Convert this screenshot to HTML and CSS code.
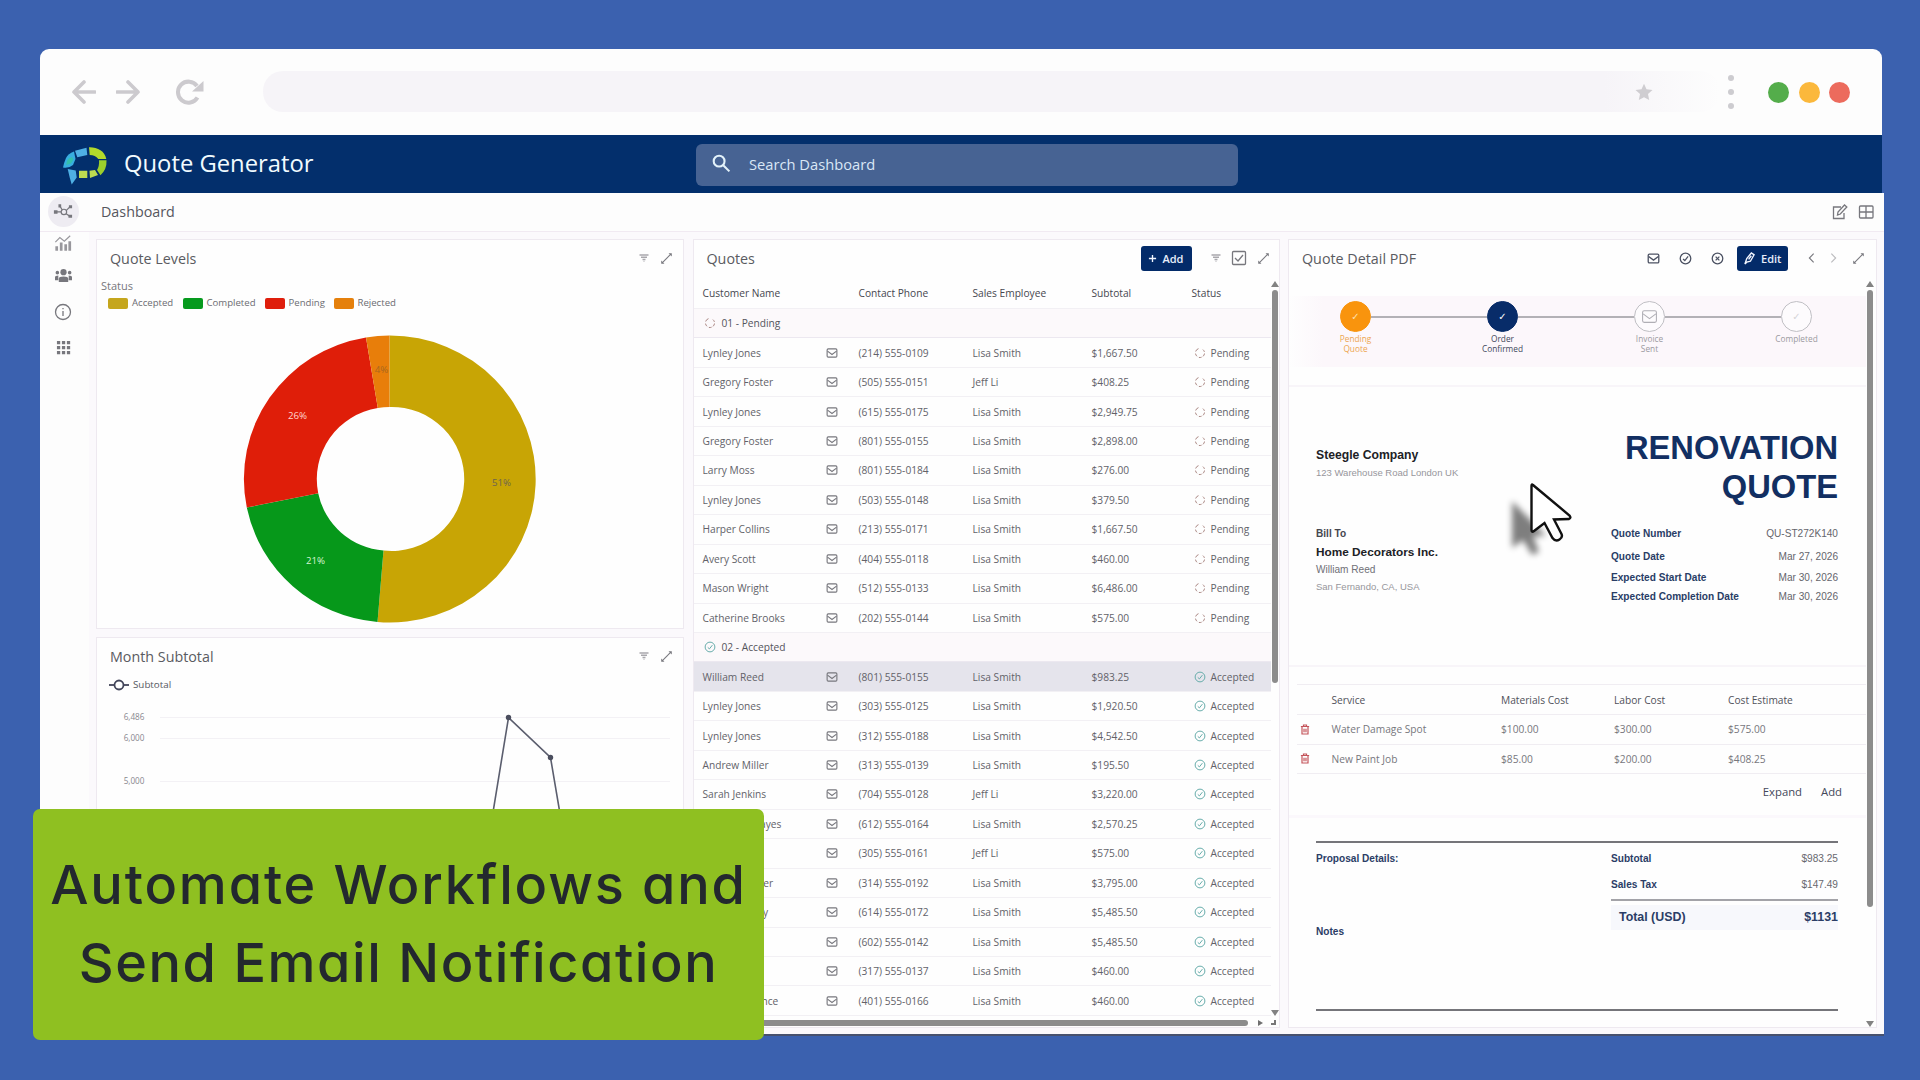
FILE: index.html
```html
<!DOCTYPE html>
<html lang="en">
<head>
    <meta charset="UTF-8">
    <meta name="viewport" content="width=device-width, initial-scale=1.0">
    <title>Quote Generator</title>
    <link rel="stylesheet" href="styles.css">
</head>
<body>
    <!-- icons -->
    <svg class="defs" width="0" height="0">
        <symbol id="i-mail" viewBox="0 0 16 16"><rect x="1.5" y="2.5" width="13" height="11" rx="1.5"/><path d="M2 5.5l6 4.5 6-4.5"/></symbol>
        <symbol id="i-check" viewBox="0 0 16 16"><circle cx="8" cy="8" r="6.5"/><path d="M5 8.5l2.2 2 4-5"/></symbol>
        <symbol id="i-cross" viewBox="0 0 16 16"><circle cx="8" cy="8" r="6.5"/><path d="M5.7 5.7l4.6 4.6M10.3 5.7l-4.6 4.6"/></symbol>
        <symbol id="i-pending" viewBox="0 0 16 16"><path d="M6 2.2A6 6 0 0 0 2.2 6M2 8.8a6 6 0 0 0 2 3.6M6.5 13.9a6 6 0 0 0 3.6-.3M12 12.5a6 6 0 0 0 2-3.8M13.9 6.5a6 6 0 0 0-2-3"/></symbol>
        <symbol id="i-expand" viewBox="0 0 16 16"><path d="M3 13L13 3"/><path class="solid" d="M10.500 1.500H14.500v4zM1.500 10.500V14.500h4z"/></symbol>
        <symbol id="i-filter" viewBox="0 0 16 16"><path d="M2 4h12M4 7h8M6 10h4M7.500 12.500h1"/></symbol>
        <symbol id="i-trash" viewBox="0 0 16 16"><path d="M2.500 4h11M6 3.500V2h4v1.500M4 4.500V14h8V4.500M6.700 7v4.500M9.300 7v4.500"/></symbol>
    </svg>

    <div class="window">
        <div class="chrome">
            <svg class="nav-arrow" viewBox="0 0 24 24"><path d="M23 12H2M12 2L2 12l10 10"/></svg>
            <svg class="nav-arrow forward" viewBox="0 0 24 24"><path d="M1 12h21M12 2l10 10-10 10"/></svg>
            <svg class="reload" viewBox="0 0 30 26"><path d="M22.500 18.500A10.500 10.500 0 1 1 22 7"/><path class="solid" d="M28.500 2v10.500H17z"/></svg>
            <div class="address">
                <svg class="star" viewBox="0 0 18 18"><path d="M9 .8l2.500 5.500 6 .7-4.500 4.100 1.200 6L9 14.200l-5.200 2.900 1.200-6L.5 7l6-.7z"/></svg>
            </div>
            <div class="dots"><i></i><i></i><i></i></div>
            <div class="lights"><i class="green"></i><i class="yellow"></i><i class="red"></i></div>
        </div>

        <header class="topbar">
            <svg class="logo" viewBox="0 0 44 39">
                <path fill="#38aee0" d="M11 5.500Q5 7.500 3 12T0 21.500q6 1 10-2.500l2.500-6z"/>
                <path fill="#35c0ad" d="M9 11q-4 1-5 4l-1 4 5-1.500 2.500-4z"/>
                <path fill="#4fb0e4" d="M12 4.700l11.500-3 .8 7.300-10 2.300zM4.700 23l8 1.500 1 7-5 7-2-7z"/>
                <path fill="#b3da2b" d="M26 1.300C34 1 42 5 43.300 13h-8q-3-4-8.600-4z"/>
                <path fill="#9ccf2c" d="M36 14.300h7.500q.5 9-6 15L34 24q2.500-4 2-9.700z"/>
                <path fill="#bddc50" d="M16 24.700h8.300V32H16zM26.500 24.700l5.500-.7 3 5-8 3z"/>
            </svg>
            <h1>Quote Generator</h1>
            <div class="search">
                <svg viewBox="0 0 20 20"><circle cx="7.500" cy="7.500" r="5.700"/><path d="M11.800 11.800l6.500 6.500"/></svg>
                <span>Search Dashboard</span>
            </div>
        </header>

        <div class="app">
            <div class="subbar">
                <span>Dashboard</span>
                <svg class="icon tool" viewBox="0 0 16 16"><path d="M9 3H1.500v11.500H12V9M5.500 11l.5-3 6.500-7 2.300 2L8.300 10z"/></svg>
                <svg class="icon tool" viewBox="0 0 16 16"><rect x="1.500" y="2" width="13.500" height="12" rx="1"/><path d="M8 2v12M1.500 8H15"/></svg>
            </div>
            <nav class="sidebar">
                <span class="current"><svg class="icon" viewBox="0 0 22 18"><circle cx="12" cy="9.500" r="3"/><path d="M9 9.500H3M10 7L7.500 3M14.500 8l4-4M14.500 11.500l3.500 2.500"/><path class="solid" d="M1 7.500h4v4H1zM6 1h3v3.500H6zM17.500 2h3.500v3.500h-3.500zM17 12.500h4V16h-4z"/></svg></span>
                <svg class="icon chart" viewBox="0 0 20 20"><path d="M1.500 9l5-5 5 4 6.500-6"/><path class="bars" d="M3 18.500v-5M8 18.500v-9M13 18.500v-7M17.500 18.500V8"/></svg>
                <svg class="icon people" viewBox="0 0 20 18"><g class="solid"><circle cx="10" cy="5.500" r="3.300"/><circle cx="3.500" cy="6" r="1.900"/><circle cx="16.500" cy="6" r="1.900"/><path d="M5 16v-3.500Q5 10 10 10t5 2.500V16zM1 14v-3q0-2 3.500-2v5zM19 14v-3q0-2-3.500-2v5z"/></g></svg>
                <svg class="icon info" viewBox="0 0 18 18"><circle cx="9" cy="9" r="7.500"/><path d="M9 8v5M9 5v1.300"/></svg>
                <svg class="icon apps" viewBox="0 0 16 16"><path class="solid" d="M1 1h3.500v3.500H1zM6.300 1h3.500v3.500H6.300zM11.600 1h3.500v3.500h-3.500zM1 6.300h3.500v3.500H1zM6.300 6.300h3.500v3.500H6.300zM11.600 6.300h3.500v3.500h-3.500zM1 11.600h3.500v3.500H1zM6.300 11.600h3.500v3.500H6.300zM11.600 11.600h3.500v3.500h-3.500z"/></svg>
            </nav>

            <main>
                <div class="column">
                    <section class="panel">
                        <div class="panel-head"><h2>Quote Levels</h2>
                            <svg class="icon filter"><use href="#i-filter"/></svg>
                            <svg class="icon expand"><use href="#i-expand"/></svg>
                        </div>
                        <div class="status-label">Status</div>
                        <div class="legend">
                            <span><i class="accepted"></i>Accepted</span>
                            <span><i class="completed"></i>Completed</span>
                            <span><i class="pending"></i>Pending</span>
                            <span><i class="rejected"></i>Rejected</span>
                        </div>
                        <svg class="donut" viewBox="-292.500 -165 586 313">
                            <path fill="#c8a505" d="M0-143.500A146 143.500 0 1 1-12 143L-6 71.500A72.500 72 0 1 0 0-72z"/>
                            <path fill="#06981a" d="M-12 143A146 143.500 0 0 1-142.700 28.500L-71.300 14.200A72.500 72 0 0 0-6 71.500z"/>
                            <path fill="#df1e09" d="M-142.700 28.500A146 143.500 0 0 1-23.500-141.600L-11.700-71A72.500 72 0 0 0-71.300 14.200z"/>
                            <path fill="#e87e0a" d="M-23.500-141.600A146 143.500 0 0 1 0-143.500V-72A72.500 72 0 0 0-11.700-71z"/>
                            <text x="112" y="7" fill="#6d6350">51%</text>
                            <text x="-74" y="85" fill="#d5f5d2">21%</text>
                            <text x="-92" y="-60" fill="#ffd9cf">26%</text>
                            <text x="-8" y="-106" fill="#a8681f">4%</text>
                        </svg>
                    </section>
                    <section class="panel">
                        <div class="panel-head"><h2>Month Subtotal</h2>
                            <svg class="icon filter"><use href="#i-filter"/></svg>
                            <svg class="icon expand"><use href="#i-expand"/></svg>
                        </div>
                        <div class="series">
                            <svg viewBox="0 0 20 12"><path d="M0 6h20"/><circle cx="10" cy="6" r="4.500"/></svg>Subtotal
                        </div>
                        <svg class="line-chart" viewBox="97 696 586 330">
                            <path class="grid" d="M160 718.500h510M160 739.500h510M160 782.500h510M160 825.500h510"/>
                            <text x="144.500" y="721">6,486</text>
                            <text x="144.500" y="742">6,000</text>
                            <text x="144.500" y="784.500">5,000</text>
                            <path class="line" d="M487 850L508.500 718.500 550.500 758.500 566 850"/>
                            <circle cx="508.500" cy="718.500" r="2.700"/>
                            <circle cx="550.500" cy="758.500" r="2.700"/>
                        </svg>
                    </section>
                </div>

                <section class="panel quotes">
                    <div class="panel-head"><h2>Quotes</h2>
                        <button class="add"><svg viewBox="0 0 10 10"><path d="M5 1v8M1 5h8"/></svg>Add</button>
                        <svg class="icon filter"><use href="#i-filter"/></svg>
                        <svg class="icon select" viewBox="0 0 16 16"><rect x="1.500" y="1.500" width="13" height="13" rx="1"/><path d="M4 8l3 3 5-6"/></svg>
                        <svg class="icon expand"><use href="#i-expand"/></svg>
                    </div>
                    <div class="scroll-area">
                        <div class="table" id="quotes"></div>
                        <div class="vscroll"><b class="up"></b><i></i><b class="down"></b></div>
                    </div>
                    <div class="hscroll"><i></i><b></b><em></em></div>
                </section>

                <section class="panel detail">
                    <div class="panel-head"><h2>Quote Detail PDF</h2>
                        <svg class="icon act"><use href="#i-mail"/></svg>
                        <svg class="icon act"><use href="#i-check"/></svg>
                        <svg class="icon act"><use href="#i-cross"/></svg>
                        <button class="edit"><svg viewBox="0 0 12 14"><path d="M1 13l2-6 5-6 3 2-4 7-4 1zM5 8l3-4"/></svg>Edit</button>
                        <svg class="icon chev" viewBox="0 0 8 14"><path d="M6.500 2l-5 5 5 5"/></svg>
                        <svg class="icon chev off" viewBox="0 0 8 14"><path d="M1.500 2l5 5-5 5"/></svg>
                        <svg class="icon expand"><use href="#i-expand"/></svg>
                    </div>
                    <div class="scroll-area">
                        <div class="document">
                            <div class="stepper">
                                <div class="step orange"><i>✓</i><span>Pending<br>Quote</span></div>
                                <div class="step navy"><i>✓</i><span>Order<br>Confirmed</span></div>
                                <div class="step"><i><svg class="icon"><use href="#i-mail"/></svg></i><span>Invoice<br>Sent</span></div>
                                <div class="step"><i>✓</i><span>Completed</span></div>
                            </div>
                            <div class="sheet">
                                <div class="parties">
                                    <strong class="name">Steegle Company</strong>
                                    <span class="muted">123 Warehouse Road London UK</span>
                                    <strong class="bill">Bill To</strong>
                                    <strong class="name client">Home Decorators Inc.</strong>
                                    <span class="contact">William Reed</span>
                                    <span class="muted">San Fernando, CA, USA</span>
                                </div>
                                <div class="facts">
                                    <h3>RENOVATION<br>QUOTE</h3>
                                    <dl>
                                        <dt>Quote Number</dt><dd>QU-ST272K140</dd>
                                        <dt>Quote Date</dt><dd>Mar 27, 2026</dd>
                                        <dt>Expected Start Date</dt><dd>Mar 30, 2026</dd>
                                        <dt>Expected Completion Date</dt><dd>Mar 30, 2026</dd>
                                    </dl>
                                </div>
                            </div>
                            <div class="services">
                                <div class="service labels"><span></span><span>Service</span><span>Materials Cost</span><span>Labor Cost</span><span>Cost Estimate</span></div>
                                <div class="service"><svg class="icon"><use href="#i-trash"/></svg><span>Water Damage Spot</span><span>$100.00</span><span>$300.00</span><span>$575.00</span></div>
                                <div class="service"><svg class="icon"><use href="#i-trash"/></svg><span>New Paint Job</span><span>$85.00</span><span>$200.00</span><span>$408.25</span></div>
                                <div class="service-actions"><span>Expand</span><span>Add</span></div>
                            </div>
                            <div class="summary">
                                <div class="notes"><strong>Proposal Details:</strong><strong>Notes</strong></div>
                                <div class="totals">
                                    <div><strong>Subtotal</strong><span>$983.25</span></div>
                                    <div class="tax"><strong>Sales Tax</strong><span>$147.49</span></div>
                                    <div class="total"><strong>Total (USD)</strong><strong>$1131</strong></div>
                                </div>
                            </div>
                        </div>
                        <div class="vscroll"><b class="up"></b><i></i><b class="down"></b></div>
                    </div>
                </section>
            </main>
        </div>
    </div>

    <div class="banner">
        <div class="line-one">Automate Workflows and</div>
        <div class="line-two">Send Email Notification</div>
    </div>

    <svg class="cursor" viewBox="0 0 80 90">
        <path class="shadow" d="M12 23v47l11-8 9 15 7-3-6-16h13z"/>
        <path class="arrow" d="M33 7q-1.500-1.500-1.500 1v44q0 3 2.500 1l10.500-8 8 15q3 4 7 1.500 3.500-2 2-5.500L54 41.500l15-.5q2.500-1 .5-3.500z"/>
    </svg>

    <script>
        const quotes = [
            ['Lynley Jones', '(214) 555-0109', 'Lisa Smith', '$1,667.50'],
            ['Gregory Foster', '(505) 555-0151', 'Jeff Li', '$408.25'],
            ['Lynley Jones', '(615) 555-0175', 'Lisa Smith', '$2,949.75'],
            ['Gregory Foster', '(801) 555-0155', 'Lisa Smith', '$2,898.00'],
            ['Larry Moss', '(801) 555-0184', 'Lisa Smith', '$276.00'],
            ['Lynley Jones', '(503) 555-0148', 'Lisa Smith', '$379.50'],
            ['Harper Collins', '(213) 555-0171', 'Lisa Smith', '$1,667.50'],
            ['Avery Scott', '(404) 555-0118', 'Lisa Smith', '$460.00'],
            ['Mason Wright', '(512) 555-0133', 'Lisa Smith', '$6,486.00'],
            ['Catherine Brooks', '(202) 555-0144', 'Lisa Smith', '$575.00'],
            ['William Reed', '(801) 555-0155', 'Lisa Smith', '$983.25'],
            ['Lynley Jones', '(303) 555-0125', 'Lisa Smith', '$1,920.50'],
            ['Lynley Jones', '(312) 555-0188', 'Lisa Smith', '$4,542.50'],
            ['Andrew Miller', '(313) 555-0139', 'Lisa Smith', '$195.50'],
            ['Sarah Jenkins', '(704) 555-0128', 'Jeff Li', '$3,220.00'],
            ['Rosemary Hayes', '(612) 555-0164', 'Lisa Smith', '$2,570.25'],
            ['Amy Li', '(305) 555-0161', 'Jeff Li', '$575.00'],
            ['Michael Parker', '(314) 555-0192', 'Lisa Smith', '$3,795.00'],
            ['Kevin Murphy', '(614) 555-0172', 'Lisa Smith', '$5,485.50'],
            ['Lucy Ward', '(602) 555-0142', 'Lisa Smith', '$5,485.50'],
            ['Amy Stone', '(317) 555-0137', 'Lisa Smith', '$460.00'],
            ['Diana Lawrence', '(401) 555-0166', 'Lisa Smith', '$460.00']
        ];

        function icon(name, cls) {
            return `<svg class="icon ${cls}"><use href="#i-${name}"/></svg>`;
        }

        function group(label, name) {
            return `<div class="group">${icon(name, name)}${label}</div>`;
        }

        function row(quote, index) {
            const pending = index < 10;
            const status = pending ? 'Pending' : 'Accepted';
            const name = pending ? 'pending' : 'check';
            return `<div class="row${index === 10 ? ' selected' : ''}">
                <span class="customer">${quote[0]}</span>${icon('mail', 'mail')}
                <span>${quote[1]}</span><span>${quote[2]}</span><span>${quote[3]}</span>
                <span class="status">${icon(name, name)}${status}</span></div>`;
        }

        let html = `<div class="row head"><span class="customer">Customer Name</span><span></span>
            <span>Contact Phone</span><span>Sales Employee</span><span>Subtotal</span><span>Status</span></div>`;
        html += group('01 - Pending', 'pending');
        quotes.forEach((quote, index) => {
            if (index === 10) html += group('02 - Accepted', 'check');
            html += row(quote, index);
        });
        document.getElementById('quotes').innerHTML = html;
    </script>
</body>
</html>
```
FILE: styles.css
```css
* {
    box-sizing: border-box;
}
body {
    margin: 0;
    height: 1080px;
    padding: 49px 38px 0 40px;
    overflow: hidden;
    background-color: #3b61af;
    font-family: "Open Sans", "Noto Sans", sans-serif;
    color: #55565e;
}
h1, h2, h3, dl, dd {
    margin: 0;
    font-weight: normal;
}
svg {
    flex: none;
    display: block;
}
.defs {
    position: absolute;
}
.icon {
    width: 14px;
    height: 14px;
    fill: none;
    stroke: #77777d;
    stroke-width: 1.3;
}
.solid {
    fill: #77777d;
    stroke: none;
}
.window {
    width: 1842px;
    height: 985px;
}

/* browser chrome */
.chrome {
    display: flex;
    align-items: center;
    height: 86px;
    padding-left: 32px;
    border-radius: 9px 9px 0 0;
    background-color: #fdfdfd;
}
.nav-arrow {
    width: 24px;
    height: 24px;
    margin-top: -1px;
    fill: none;
    stroke: #cccace;
    stroke-width: 3.6;
    stroke-linecap: round;
    stroke-linejoin: round;
}
.forward {
    margin-left: 20px;
}
.reload {
    width: 30px;
    height: 26px;
    margin: -1px 0 0 35px;
    fill: none;
    stroke: #cccace;
    stroke-width: 4;
}
.reload .solid {
    fill: #cccace;
}
.address {
    display: flex;
    align-items: center;
    justify-content: flex-end;
    width: 1457px;
    height: 41px;
    margin: -1px 0 0 58px;
    padding-right: 67px;
    border-radius: 20px;
    background: linear-gradient(to right, #f6f4f8 92%, #fdfdfd);
}
.star {
    width: 18px;
    height: 18px;
    fill: #cfcdd1;
}
.dots {
    display: flex;
    flex-direction: column;
    gap: 8px;
    margin: -1px 0 0 8px;
}
.dots i {
    width: 6px;
    height: 6px;
    border-radius: 50%;
    background-color: #cdccd0;
}
.lights {
    display: flex;
    gap: 9.5px;
    margin: 1px 0 0 34px;
}
.lights i {
    width: 21px;
    height: 21px;
    border-radius: 50%;
}
.green { background-color: #54ad4b; }
.yellow { background-color: #fbb83c; }
.red { background-color: #ec6b5d; }

/* app header */
.topbar {
    display: flex;
    align-items: center;
    height: 58px;
    padding-left: 23px;
    background-color: #032f6c;
}
.logo {
    width: 44px;
    height: 39px;
    margin-top: 2px;
}
.topbar h1 {
    width: 589px;
    margin-top: -3px;
    padding-left: 17px;
    font-size: 23.8px;
    color: #f1fbff;
}
.search {
    display: flex;
    align-items: center;
    width: 542px;
    height: 42px;
    margin-top: 1px;
    padding: 0 0 2px 16px;
    border-radius: 6px;
    background-color: #476393;
    font-size: 14.7px;
    color: #d9e7f6;
}
.search svg {
    width: 19px;
    height: 19px;
    margin-right: 18px;
    fill: none;
    stroke: #e3f2fa;
    stroke-width: 2.2;
}

.app {
    display: grid;
    grid-template-columns: 49px 1fr;
    grid-template-rows: 39px 1fr;
    width: 1844px;
    height: 841px;
    background-color: #fdfdfd;
    border-bottom: 1px solid #e6e6ec;
    box-shadow: 0 2px 0 #47516e;
}
.subbar {
    grid-column: 1 / 3;
    display: flex;
    align-items: center;
    padding: 0 10px 1px 61px;
    border-bottom: 1px solid #f1eaf2;
    font-size: 14.3px;
}
.subbar span {
    flex: 1;
}
.tool {
    width: 16px;
    height: 16px;
    margin-left: 10px;
}
.sidebar {
    display: flex;
    flex-direction: column;
    align-items: center;
    padding-right: 3px;
}
.current {
    display: flex;
    align-items: center;
    justify-content: center;
    width: 31px;
    height: 31px;
    margin-top: -36px;
    border-radius: 50%;
    background-color: #eeecf2;
}
.current .icon {
    width: 20px;
    height: 17px;
}
.chart {
    width: 18px;
    height: 18px;
    margin-top: 7px;
    stroke: #98979c;
}
.chart .bars {
    stroke-width: 3;
}
.people {
    width: 19px;
    height: 17px;
    margin-top: 15px;
}
.info {
    width: 18px;
    height: 18px;
    margin-top: 19px;
}
.apps {
    width: 15px;
    height: 15px;
    margin-top: 19px;
}
main {
    display: grid;
    grid-template-columns: 588px 587px 589px;
    gap: 0 8.5px;
    padding: 7px 7px 6px;
    background-color: #fbf9fc;
}
.column {
    display: grid;
    grid-template-rows: 390px 390px;
    gap: 8px;
}
.panel {
    display: flex;
    flex-direction: column;
    min-width: 0;
    min-height: 0;
    overflow: hidden;
    border: 1px solid #eee9f0;
    background-color: #fefefe;
}
.panel-head {
    display: flex;
    flex: none;
    align-items: center;
    height: 36px;
    margin-bottom: 2px;
    padding: 0 10px 0 13px;
}
.panel-head h2 {
    flex: 1;
    font-size: 14.3px;
    color: #5a5b61;
}
.panel-head .filter {
    width: 12px;
    height: 12px;
    stroke: #a9a8ad;
    stroke-width: 1.8;
}
.panel-head .expand {
    width: 13px;
    height: 13px;
    margin-left: 10px;
}
.panel-head button {
    display: flex;
    align-items: center;
    gap: 6px;
    height: 25px;
    border: 0;
    border-radius: 3px;
    background-color: #032b69;
    font: 600 11px "Open Sans", sans-serif;
    color: #e6eefb;
}
.panel-head button svg {
    fill: none;
    stroke: #f2f6ff;
    stroke-width: 1.5;
}

/* donut */
.status-label {
    height: 17px;
    padding-left: 4px;
    font-size: 11px;
    line-height: 16px;
    color: #77777c;
}
.legend {
    display: flex;
    height: 16px;
    padding-left: 11px;
    font-size: 9.6px;
    line-height: 16px;
    color: #6c6c72;
}
.legend span {
    display: flex;
    align-items: center;
    width: 74.5px;
}
.legend span:nth-child(2) {
    width: 82px;
}
.legend span:nth-child(3) {
    width: 69px;
}
.legend i {
    width: 20px;
    height: 11px;
    margin-right: 4px;
    border-radius: 2px;
}
.accepted { background-color: #c5a61d; }
.completed { background-color: #069a1e; }
.legend .pending { background-color: #df1e0c; }
.rejected { background-color: #e5800c; }
.donut {
    width: 586px;
    height: 313px;
    margin-top: 3px;
    font-size: 9.7px;
    text-anchor: middle;
}

/* line chart */
.series {
    display: flex;
    align-items: center;
    height: 20px;
    margin-top: -1px;
    padding: 0 0 1px 12px;
    font-size: 9.8px;
}
.series svg {
    width: 20px;
    height: 12px;
    margin-right: 4px;
    fill: #fff;
    stroke: #42455a;
    stroke-width: 1.8;
}
.line-chart {
    width: 586px;
    height: 330px;
    font-size: 8.2px;
    text-anchor: end;
    fill: #88878e;
}
.line-chart .grid {
    stroke: #f3f1f5;
}
.line-chart .line {
    fill: none;
    stroke: #5b5e6e;
    stroke-width: 1.6;
}
.line-chart circle {
    fill: #4b4e5e;
}

/* quotes */
.add {
    width: 51px;
    padding: 0 0 0 7px;
    margin-right: 18px;
}
.quotes .panel-head {
    padding-right: 9px;
}
.add svg {
    width: 9px;
    height: 9px;
}
.panel-head .select {
    width: 16px;
    height: 16px;
    margin-left: 9px;
}
.scroll-area {
    display: flex;
    flex: 1;
    min-height: 0;
}
.table {
    width: 577px;
    font-size: 10.2px;
    color: #626269;
}
.row {
    display: grid;
    grid-template-columns: 120.5px 35.5px 114px 119px 100px 1fr;
    align-items: center;
    height: 29.46px;
    padding-left: 9px;
    border-bottom: 1px solid #f2f0f4;
}
.row.head {
    height: 31px;
    color: #46474f;
}
.row .mail {
    width: 12px;
    height: 12px;
    margin-left: 3px;
    stroke-width: 1.5;
}
.row.selected {
    background-color: #e5e4ec;
}
.status {
    display: flex;
    align-items: center;
}
.status .icon {
    width: 12px;
    height: 12px;
    margin: 0 5px 0 2px;
}
.icon.pending {
    stroke: #a8847f;
}
.icon.check {
    stroke: #62aaa8;
}
.group {
    display: flex;
    align-items: center;
    height: 29.46px;
    padding-left: 10px;
    border-bottom: 1px solid #ece8f0;
    background-color: #fcf9fb;
    color: #54545b;
}
.group .icon {
    width: 12px;
    height: 12px;
    margin-right: 6px;
}
.vscroll {
    display: flex;
    flex-direction: column;
    align-items: center;
    width: 8px;
    padding: 3px 0 0;
}
.vscroll i {
    width: 6px;
    height: 393px;
    margin-top: 3px;
    border-radius: 3px;
    background-color: #8c8c8c;
}
.vscroll b {
    border: solid transparent;
    border-width: 0 4px;
}
.vscroll .up {
    border-bottom: 6px solid #828282;
}
.vscroll .down {
    margin-top: auto;
    border-top: 6px solid #828282;
}
.hscroll {
    display: flex;
    flex: none;
    align-items: center;
    height: 11px;
    padding: 3px 3px 0;
}
.hscroll i {
    width: 555px;
    height: 6px;
    border-radius: 3px;
    background-color: #8c8c8c;
}
.hscroll b {
    margin-left: 10px;
    border: solid transparent;
    border-width: 3.5px 0;
    border-left: 5px solid #707070;
}
.hscroll em {
    width: 5px;
    height: 5px;
    margin-left: 8px;
    border: solid #777;
    border-width: 0 2px 2px 0;
}

/* quote detail */
.detail .act {
    width: 13px;
    height: 13px;
    margin-right: 19px;
    stroke: #4c5263;
    stroke-width: 1.6;
}
.edit {
    width: 51px;
    margin: 0 20px 0 -6px;
    padding: 0 0 0 7px;
}
.edit svg {
    width: 11px;
    height: 13px;
}
.chev {
    width: 7px;
    height: 12px;
    margin-right: 15px;
}
.chev.off {
    opacity: .5;
}
.detail .panel-head .expand {
    margin: 0 1px 0 0;
}
.document {
    width: 577px;
}
.detail .vscroll {
    width: 8px;
}
.detail .vscroll i {
    height: 617px;
}
.stepper {
    display: grid;
    grid-template-columns: repeat(4, 147px);
    height: 71px;
    margin: 18px 0 0 -7px;
    padding-top: 5px;
    background: linear-gradient(to right, #fefefe 1%, #fcf7fb 7%);
}
.step {
    position: relative;
    display: flex;
    flex-direction: column;
    align-items: center;
    font-size: 8.3px;
    line-height: 10px;
    text-align: center;
    color: #9b99a0;
}
.step i {
    display: flex;
    align-items: center;
    justify-content: center;
    width: 31px;
    height: 31px;
    margin-bottom: 2px;
    border: 1.5px solid #c0bfc4;
    border-radius: 50%;
    background-color: #fdfbfd;
    font: 10px "DejaVu Sans", sans-serif;
    color: #d5d4d8;
}
.step .icon {
    width: 19px;
    height: 17px;
    stroke: #b0afb5;
    stroke-width: 1;
}
.step:not(:last-child)::after {
    content: "";
    position: absolute;
    top: 15px;
    left: 89px;
    width: 116px;
    height: 2px;
    background-color: #b3b1b6;
}
.step.orange {
    color: #eda550;
}
.step.orange i {
    border-color: #f9940d;
    background-color: #f9940d;
    color: #ffe0ae;
}
.step.navy {
    color: #42485b;
}
.step.navy i {
    border-color: #082c69;
    background-color: #082c69;
    color: #fff;
}
.sheet {
    display: flex;
    justify-content: space-between;
    height: 282px;
    margin-top: 18px;
    padding: 0 28px 0 27px;
    border: solid #f8f5f9;
    border-width: 2px 0;
    font-family: "Liberation Sans", Arial, sans-serif;
    font-size: 10.1px;
}
.parties {
    display: flex;
    flex-direction: column;
    padding-top: 59px;
    line-height: 18px;
}
.parties .name {
    font-size: 12.2px;
    color: #202125;
}
.parties .client {
    font-size: 11.8px;
}
.muted {
    font-size: 9.5px;
    color: #97969c;
}
.parties .muted:last-child {
    line-height: 16px;
}
.bill {
    margin-top: 43px;
    color: #44464f;
}
.contact {
    color: #707077;
}
.facts {
    width: 227px;
    padding-top: 41px;
}
.facts h3 {
    font-size: 32.7px;
    font-weight: bold;
    line-height: 39px;
    text-align: right;
    white-space: nowrap;
    color: #122f62;
}
.facts dl {
    display: grid;
    grid-template-columns: auto auto;
    grid-template-rows: 24px 22px 19px 20px;
    align-items: center;
    margin-top: 15.5px;
}
dt {
    font-weight: bold;
    color: #293d66;
}
dd {
    text-align: right;
    color: #65656c;
}
.services {
    height: 134px;
    margin-top: 17px;
    padding-left: 8px;
    border-bottom: 3px solid #fbf8fc;
    font-size: 10.2px;
}
.service {
    display: grid;
    grid-template-columns: 34.5px 169.5px 113px 114px 1fr;
    align-items: center;
    height: 29.5px;
    border-bottom: 1px solid #f0edf2;
    color: #77777d;
}
.service.labels {
    height: 31px;
    border-top: 1px solid #f0edf2;
    color: #50515a;
}
.service .icon {
    width: 12px;
    height: 13px;
    margin-left: 2px;
    stroke: #c4545a;
    stroke-width: 1.6;
}
.service-actions {
    display: flex;
    justify-content: flex-end;
    gap: 19px;
    padding-right: 24px;
    font-size: 11.3px;
    line-height: 36px;
    color: #44485a;
}
.summary {
    display: flex;
    justify-content: space-between;
    height: 170px;
    margin: 23px 28px 0 27px;
    border: solid #75757a;
    border-width: 2px 0;
    font-family: "Liberation Sans", Arial, sans-serif;
    font-size: 10.1px;
    color: #68686e;
}
.summary strong {
    color: #2b3d66;
}
.notes {
    display: flex;
    flex-direction: column;
    gap: 53px;
    padding-top: 6px;
    line-height: 20px;
}
.totals {
    width: 227px;
    padding-top: 6px;
}
.totals div {
    display: flex;
    justify-content: space-between;
    height: 26px;
    line-height: 20px;
}
.totals .tax {
    border-bottom: 2px solid #a3a3a8;
}
.totals .total {
    height: 25px;
    margin-top: 4px;
    padding-left: 8px;
    background-color: #f7f8fc;
    font-size: 12.4px;
    line-height: 25px;
}

/* overlays */
.banner {
    position: absolute;
    left: 33px;
    top: 809px;
    width: 731px;
    height: 231px;
    padding-top: 37px;
    border-radius: 7px;
    background-color: #8fc021;
    font-family: Inter, sans-serif;
    font-size: 54px;
    font-weight: 500;
    font-feature-settings: "cv11";
    line-height: 78px;
    text-align: center;
    white-space: nowrap;
    color: #23282e;
}
.line-one {
    letter-spacing: 1.85px;
}
.line-two {
    letter-spacing: 1.55px;
}
.cursor {
    position: absolute;
    left: 1500px;
    top: 478px;
    width: 80px;
    height: 90px;
}
.cursor .shadow {
    fill: #000;
    opacity: .5;
    filter: blur(3px);
}
.cursor .arrow {
    fill: #fff;
    stroke: #111;
    stroke-width: 2.4;
}
```
